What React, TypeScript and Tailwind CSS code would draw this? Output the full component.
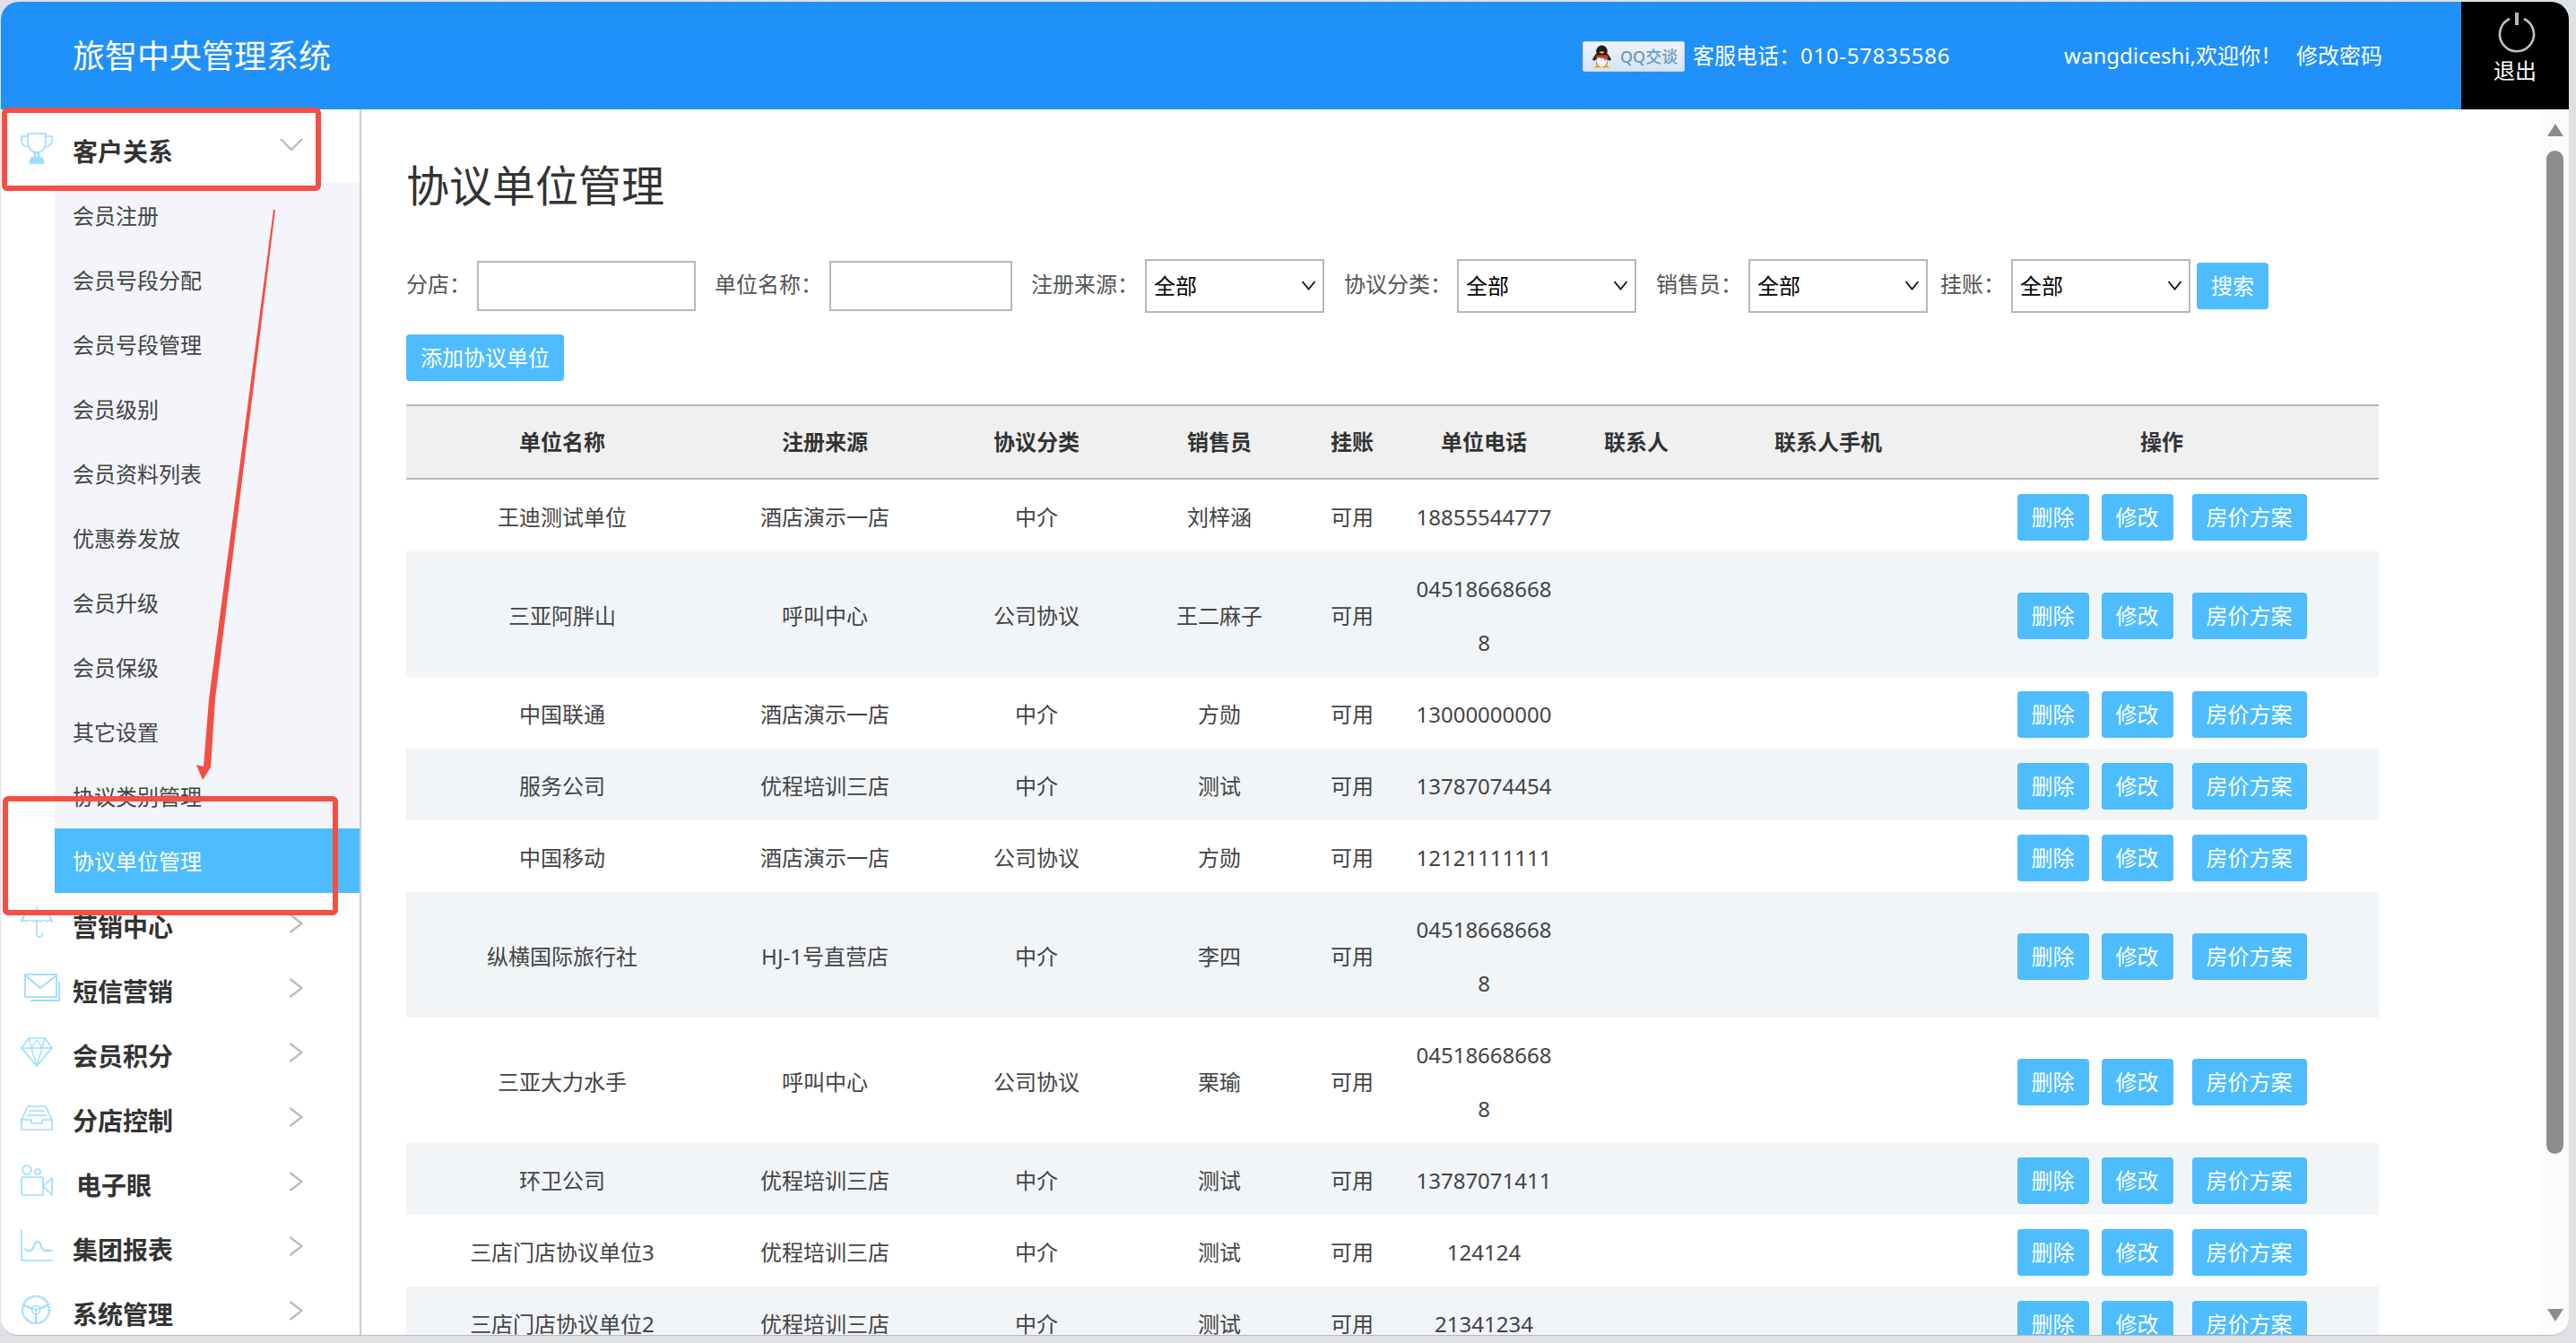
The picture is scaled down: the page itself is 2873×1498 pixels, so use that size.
const cjk = "font-['Noto_Sans','Noto_Sans_CJK_SC',sans-serif]";

type Row = { name: string; source: string; kind: string; sales: string; phone: string };

const rows: Row[] = [
  { name: "王迪测试单位", source: "酒店演示一店", kind: "中介", sales: "刘梓涵", phone: "18855544777" },
  { name: "三亚阿胖山", source: "呼叫中心", kind: "公司协议", sales: "王二麻子", phone: "045186686688" },
  { name: "中国联通", source: "酒店演示一店", kind: "中介", sales: "方勋", phone: "13000000000" },
  { name: "服务公司", source: "优程培训三店", kind: "中介", sales: "测试", phone: "13787074454" },
  { name: "中国移动", source: "酒店演示一店", kind: "公司协议", sales: "方勋", phone: "12121111111" },
  { name: "纵横国际旅行社", source: "HJ-1号直营店", kind: "中介", sales: "李四", phone: "045186686688" },
  { name: "三亚大力水手", source: "呼叫中心", kind: "公司协议", sales: "栗瑜", phone: "045186686688" },
  { name: "环卫公司", source: "优程培训三店", kind: "中介", sales: "测试", phone: "13787071411" },
  { name: "三店门店协议单位3", source: "优程培训三店", kind: "中介", sales: "测试", phone: "124124" },
  { name: "三店门店协议单位2", source: "优程培训三店", kind: "中介", sales: "测试", phone: "21341234" },
];

const subItems = [
  "会员注册",
  "会员号段分配",
  "会员号段管理",
  "会员级别",
  "会员资料列表",
  "优惠券发放",
  "会员升级",
  "会员保级",
  "其它设置",
  "协议类别管理",
];

function Icon({ children }: { children: React.ReactNode }) {
  return (
    <svg
      viewBox="0 0 36 36"
      className="w-[36px] h-[36px] shrink-0 -mt-[6px] text-[#9cdcff]"
      fill="none"
      stroke="currentColor"
      strokeWidth="1.6"
      strokeLinejoin="round"
      strokeLinecap="round"
    >
      {children}
    </svg>
  );
}

const TrophyIcon = (
  <Icon>
    <path d="M8 2h20v8c0 8-4 13-10 13S8 18 8 10z" />
    <path d="M8 5H1v5c0 4 3 6 7 7M28 5h7v5c0 4-3 6-7 7" />
    <path d="M16 23h4v6h-4z" strokeWidth="2.5" />
    <path d="M10 35l2-6h12l2 6z" fill="currentColor" />
  </Icon>
);

const menu: { label: string; icon: React.ReactNode; indent?: boolean }[] = [
  {
    label: "营销中心",
    icon: (
      <Icon>
        <path d="M18 1v3M1 17C3 9 10 4 18 4s15 5 17 13c-2-2-4-2-6 0-2-2-5-2-7 0-2-2-6-2-8 0-2-2-5-2-7 0-2-2-4-2-6 0z" />
        <path d="M18 16v15c0 4 6 4 6 0" />
      </Icon>
    ),
  },
  {
    label: "短信营销",
    icon: (
      <svg viewBox="0 0 40 32" className="w-[40px] h-[32px] ml-[4px] -mr-[8px] shrink-0 -mt-[4px] text-[#9cdcff]" fill="none" stroke="currentColor" strokeWidth="1.8">
        <rect x="1" y="1" width="35" height="25" />
        <path d="M1 2l17 14L36 2" />
        <path d="M7 30h32V9" />
      </svg>
    ),
  },
  {
    label: "会员积分",
    icon: (
      <Icon>
        <path d="M9 3h18l8 11-17 20L1 14z" />
        <path d="M1 14h34M12 14l6 20 6-20M9 3l3 11 6-9 6 9 3-11" strokeWidth="1.3" />
      </Icon>
    ),
  },
  {
    label: "分店控制",
    icon: (
      <Icon>
        <path d="M1 22L8 7h20l7 15v11H1zM1 22h11v4h12v-4h11" />
        <path d="M10 12h16M7 17h22" />
      </Icon>
    ),
  },
  {
    label: "电子眼",
    indent: true,
    icon: (
      <Icon>
        <circle cx="7" cy="6" r="5" />
        <circle cx="19" cy="8" r="3" />
        <rect x="1" y="14" width="24" height="20" rx="1" />
        <path d="M25 24l10-9v19z" />
      </Icon>
    ),
  },
  {
    label: "集团报表",
    icon: (
      <Icon>
        <path d="M1 1v34h34" />
        <path d="M5 22c3 4 7 3 9-1 2-5 4-10 7-6 2 4 3 9 6 9h8" strokeWidth="2" />
      </Icon>
    ),
  },
  {
    label: "系统管理",
    icon: (
      <Icon>
        <circle cx="17" cy="18" r="15" strokeWidth="2.6" strokeDasharray="2.6 0.7" strokeLinecap="butt" />
        <circle cx="17" cy="18" r="4.5" />
        <circle cx="17" cy="18" r="1.2" fill="currentColor" />
        <path d="M4 13l9 3.5M30 13l-9 3.5M17 22.5V32" strokeWidth="2.2" />
      </Icon>
    ),
  },
];

function Sidebar() {
  return (
    <aside className="w-[402px] shrink-0 border-r-2 border-[#cccccc] bg-white overflow-hidden">
      <div className="h-[82px] flex items-center pl-[22px] pt-[10px]">
        {TrophyIcon}
        <span className="ml-[22px] text-[28px] font-bold text-[#333333] mt-[2px]">客户关系</span>
        <svg viewBox="0 0 26 14" className="ml-auto mr-[63px] -mt-[14px] w-[26px] h-[14px]" fill="none" stroke="#bbbbbb" strokeWidth="2.4">
          <path d="M1 1l12 12L25 1" />
        </svg>
      </div>
      <ul className="ml-[60px] bg-[#f3f5fa] text-[24px] text-[#444444]">
        {subItems.map((item) => (
          <li key={item} className="h-[72px] flex items-center pl-[20px] pt-[2px]">
            {item}
          </li>
        ))}
        <li className="h-[72px] flex items-center pl-[20px] pt-[2px] bg-[#4dbdff] text-white">协议单位管理</li>
      </ul>
      {menu.map((m) => (
        <div key={m.label} className="h-[72px] flex items-center pl-[22px]">
          {m.icon}
          <span className={`text-[28px] font-bold text-[#333333] mt-[4px] ${m.indent ? "ml-[26px]" : "ml-[22px]"}`}>
            {m.label}
          </span>
          <svg viewBox="0 0 16 22" className="ml-auto mr-[63px] -mt-[4px] w-[16px] h-[22px]" fill="none" stroke="#bbbbbb" strokeWidth="2.4">
            <path d="M1.5 1l13 10-13 10" />
          </svg>
        </div>
      ))}
    </aside>
  );
}

function Header() {
  return (
    <header className="relative h-[120px] shrink-0 bg-[#1e90fb] flex items-center text-white">
      <svg className="absolute inset-0 w-full h-full opacity-30 pointer-events-none">
        <filter id="grain">
          <feTurbulence type="fractalNoise" baseFrequency="0.35" numOctaves="2" seed="4" />
          <feColorMatrix values="0 0 0 0 0.05  0 0 0 0 0.35  0 0 0 0 0.8  0 0 0 1.6 -0.6" />
        </filter>
        <rect width="100%" height="100%" filter="url(#grain)" />
      </svg>
      <h1 className="relative pl-[80px] pt-[2px] text-[36px] font-normal">旅智中央管理系统</h1>
      <div className="relative ml-auto flex items-center text-[24px]">
        <div className="w-[114px] h-[34px] flex items-center pl-[8px] gap-[8px] bg-gradient-to-b from-[#eef3f9] to-[#d6e3f0] border border-[#c5d6e8] rounded-[2px] mr-[9px] mt-[1px]">
          <svg viewBox="0 0 26 26" className="w-[25px] h-[26px] shrink-0">
            <path d="M2 17c1-3 3-5 4-7l14 0c1 2 3 4 4 7l-3 1-1-2-1 6H7l-1-6-1 2z" fill="#1d1d1d" />
            <ellipse cx="13" cy="18" rx="6.5" ry="6" fill="#f4f4f4" />
            <ellipse cx="13" cy="7" rx="6.5" ry="7" fill="#1d1d1d" />
            <path d="M6 11.5h14l1 2.5-3 .5v4l-3-3.5-9-1z" fill="#d8331f" />
            <path d="M9.5 8l3.5-1.2L16.500 8 13 10z" fill="#f2b01e" />
            <path d="M4 26l4-4 5 4zM13 26l5-4 4 4z" fill="#f2a31e" />
          </svg>
          <span className="text-[18px] font-medium leading-none text-[#6b9ac2]">QQ交谈</span>
        </div>
        <span className="mr-[127px]">
          客服电话：<span className="tracking-[0.7px]">010-57835586</span>
        </span>
        <span className="mr-[16px]">wangdiceshi,欢迎你！</span>
        <span className="mr-[88px]">修改密码</span>
      </div>
      <div className="relative w-[120px] h-full bg-black flex flex-col items-center shrink-0 pt-[10px]">
        <svg viewBox="0 0 44 48" className="w-[44px] h-[48px] ml-[4px]" fill="none" stroke="#c0c0c0">
          <path d="M14 9A19 19 0 1 0 30 9" strokeWidth="2.6" />
          <path d="M22 2v14" strokeWidth="4" stroke="#b4b4b4" />
        </svg>
        <span className="text-[24px] leading-[32px] mt-[3px]">退出</span>
      </div>
    </header>
  );
}

function Select() {
  return (
    <div className="relative shrink-0">
      <select className="block w-[200px] h-[60px] border-2 border-[#b8b8b8] bg-white pl-[8px] text-[24px] text-black appearance-none">
        <option>全部</option>
      </select>
      <svg viewBox="0 0 17 11" className="absolute right-[9px] top-[24px] w-[17px] h-[11px] pointer-events-none" fill="none" stroke="#111111" strokeWidth="1.8">
        <path d="M1.500 1l7 8.500 7-8.500" />
      </svg>
    </div>
  );
}

function Btn({ label, className = "" }: { label: string; className?: string }) {
  return (
    <button className={`h-[52px] px-[16px] shrink-0 rounded-[4px] bg-[#4dbdff] text-white text-[24px] leading-none ${className}`}>
      {label}
    </button>
  );
}

function Label({ text, className }: { text: string; className: string }) {
  return <span className={`-mt-[4px] ${className}`}>{text}</span>;
}

function Filters() {
  return (
    <div className="mt-[56px] h-[60px] flex items-center text-[24px] text-[#555555]">
      <Label text="分店：" className="mr-[7px]" />
      <input className="w-[244px] h-[56px] border-2 border-[#b8b8b8] mr-[21px] shrink-0" />
      <Label text="单位名称：" className="mr-[8px]" />
      <input className="w-[204px] h-[56px] border-2 border-[#b8b8b8] mr-[21px] shrink-0" />
      <Label text="注册来源：" className="mr-[7px]" />
      <Select />
      <Label text="协议分类：" className="ml-[22px] mr-[6px]" />
      <Select />
      <Label text="销售员：" className="ml-[22px] mr-[7px]" />
      <Select />
      <Label text="挂账：" className="ml-[14px] mr-[7px]" />
      <Select />
      <Btn label="搜索" className="ml-[7px]" />
    </div>
  );
}

function Table() {
  const headers = ["单位名称", "注册来源", "协议分类", "销售员", "挂账", "单位电话", "联系人", "联系人手机", "操作"];
  const widths = ["w-[348px]", "w-[238px]", "w-[234px]", "w-[174px]", "w-[122px]", "w-[172px]", "w-[168px]", "w-[260px]", "w-[484px]"];
  return (
    <table className="mt-[26px] w-[2200px] table-fixed border-separate border-spacing-0 text-[24px] text-[#444444]">
      <thead>
        <tr>
          {headers.map((h, i) => (
            <th key={h} className={`${widths[i]} h-[84px] border-y-2 border-[#b8b8b8] bg-[#f0f0f0] font-bold text-[#333333]`}>
              {h}
            </th>
          ))}
        </tr>
      </thead>
      <tbody>
        {rows.map((r, i) => (
          <tr key={r.name} className={i % 2 === 1 ? "bg-[#f1f5f8]" : ""}>
            <td className="pt-[12px] pb-[8px] leading-[60px] text-center">{r.name}</td>
            <td className="pt-[12px] pb-[8px] leading-[60px] text-center">{r.source}</td>
            <td className="pt-[12px] pb-[8px] leading-[60px] text-center">{r.kind}</td>
            <td className="pt-[12px] pb-[8px] leading-[60px] text-center">{r.sales}</td>
            <td className="pt-[12px] pb-[8px] leading-[60px] text-center">可用</td>
            <td className="px-[8px] pt-[12px] pb-[8px] leading-[60px] text-center break-all">{r.phone}</td>
            <td />
            <td />
            <td className="pt-[14px] pb-[10px]">
              <div className="flex justify-center">
                <Btn label="删除" />
                <Btn label="修改" className="ml-[14px]" />
                <Btn label="房价方案" className="ml-[21px]" />
              </div>
            </td>
          </tr>
        ))}
      </tbody>
    </table>
  );
}

function ScrollRail() {
  return (
    <div className="w-[31px] shrink-0 bg-[#fbfbfb] flex flex-col items-center pt-[16px]">
      <svg viewBox="0 0 18 14" className="w-[18px] h-[14px]">
        <path d="M9 0l9 14H0z" fill="#8c8c8c" />
      </svg>
      <div className="w-[19px] mt-[16px] h-[1119px] bg-[#8c8c8c] rounded-full" />
      <svg viewBox="0 0 18 14" className="w-[18px] h-[14px] mt-[173px]">
        <path d="M9 14L18 0H0z" fill="#8c8c8c" />
      </svg>
    </div>
  );
}

function Annotations() {
  return (
    <>
      <div className="absolute left-[2px] top-[120px] w-[356px] h-[93px] border-[6px] border-[#f44f42] rounded-[6px]" />
      <div className="absolute left-[3px] top-[888px] w-[374px] h-[133px] border-[6px] border-[#f44f42] rounded-[6px]" />
      <svg className="absolute left-0 top-0 w-[2873px] h-[1498px] pointer-events-none">
        <polygon points="305,234 307,234 240,780 235,856 226,870 219,853 227,855 233,780" fill="#f44f42" />
      </svg>
    </>
  );
}

export default function App() {
  return (
    <div className={`relative w-[2873px] h-[1498px] bg-[#dfe0e4] pt-[2px] pl-[1px] pr-[8px] pb-[8px] overflow-hidden ${cjk}`}>
      <div className="h-full flex flex-col rounded-[20px] overflow-hidden bg-white border-b border-[#bbbbbb]">
        <Header />
        <div className="flex flex-1 min-h-0">
          <Sidebar />
          <main className="flex-1 min-w-0 pl-[50px] overflow-hidden">
            <h2 className="pt-[59px] text-[48px] leading-[52px] font-normal text-[#333333]">协议单位管理</h2>
            <Filters />
            <Btn label="添加协议单位" className="block mt-[24px]" />
            <Table />
          </main>
          <ScrollRail />
        </div>
      </div>
      <Annotations />
    </div>
  );
}
